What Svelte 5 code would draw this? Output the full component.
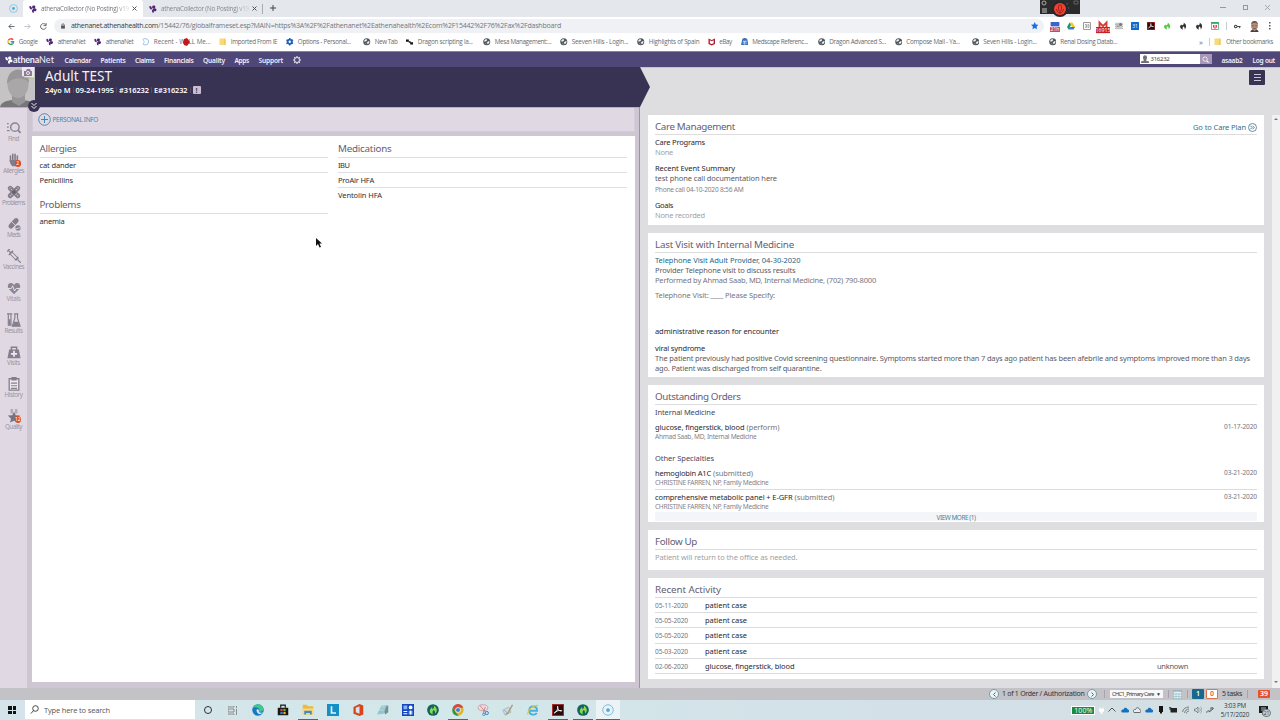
<script>
  // Letter-spaces a single line of text so that it takes up the given width.
  function fit(node, width) {
    const natural = node.getBoundingClientRect().width;
    const count = node.textContent.length;
    node.style.letterSpacing = (width - natural) / count + 'px';
  }

  const tabs = [{ active: true }, { active: false }];
  const bookmarks = [
    ['google', 'Google', 19, 39], ['leaf', 'athenaNet', 27.5, 48], ['leaf', 'athenaNet', 27.5, 48],
    ['ring', 'Recent - WELL Me...', 57, 77], ['folder', 'Imported From IE', 46.5, 67], ['cog', 'Options - Personal...', 53, 77],
    ['globe', 'New Tab', 22.5, 43], ['bits', 'Dragon scripting la...', 55, 77], ['globe', 'Mesa Management:...', 56.5, 77],
    ['globe', 'Seeven Hills - Login...', 56.5, 77], ['globe', 'Highlights of Spain', 50.5, 70.5], ['shield', 'eBay', 12.5, 33],
    ['med', 'Medscape Referenc...', 55.5, 77], ['globe', 'Dragon Advanced S...', 56.5, 77], ['globe', 'Compose Mail - Ya...', 53.5, 77],
    ['globe', 'Seven Hills - Login...', 53.5, 77], ['globe', 'Renal Dosing Datab...', 57, 80]
  ];
  const extensions = ['extcal', 'drive', 'extgrey', 'gmail', 'extnews', 'ext31', 'pdf', 'flameg', 'flame', 'flame', 'pocket'];
  const nav = [['Calendar', 26.5], ['Patients', 25], ['Claims', 19.5], ['Financials', 29.5], ['Quality', 22], ['Apps', 14.5], ['Support', 24.5]];
  const rail = [
    ['find', 'Find', 11], ['hand', 'Allergies', 21, '2'], ['bandage', 'Problems', 23], ['pills', 'Meds', 13], ['syringe', 'Vaccines', 21],
    ['heart', 'Vitals', 14], ['tubes', 'Results', 18], ['bag', 'Visits', 13], ['clip', 'History', 18], ['star', 'Quality', 17, '12']
  ];
  const activity = [
    ['05-11-2020', 'patient case', 42], ['05-05-2020', 'patient case', 42], ['05-05-2020', 'patient case', 42],
    ['05-03-2020', 'patient case', 42], ['02-06-2020', 'glucose, fingerstick, blood', 89.5, 'unknown']
  ];
  const apps = [['edge'], ['store'], ['explorer', 1], ['ell'], ['office'], ['note'], ['grid'], ['dragon'], ['chrome', 1], ['snip'], ['paint'], ['ie'], ['pdf', 1], ['dragon', 1], ['target', 2]];
  const tray = ['up', 'cloud', 'cloudw', 'cloud', 'usb', 'battery', 'wifi', 'speaker', 'pen'];
</script>

{#snippet t(text, width, cls = '')}<span class="t {cls}" use:fit={width}>{text}</span>{/snippet}

{#snippet icon(name, size = 8)}
  <svg class="icon" width={size} height={size} viewBox="0 0 16 16" fill="none">
    {#if name === 'leaf'}
      <path d="M7 7C5 3 7 0 10 1c3 0 4 4 1 6zM6 9C2 9 0 6 1 2c3-1 5 2 5 7zM7 9c2-3 8-3 8 0 0 4-3 4-5 3l-1 4c-3-1-4-4-2-7z" fill="#4f2678" />
    {:else if name === 'whiteleaf'}
      <path d="M7 7C5 3 7 0 10 1c3 0 4 4 1 6zM6 9C2 9 0 6 1 2c3-1 5 2 5 7zM7 9c2-3 8-3 8 0 0 4-3 4-5 3l-1 4c-3-1-4-4-2-7z" fill="#fff" />
    {:else if name === 'google'}
      <path d="M13 4A6 6 0 0 0 3 5" stroke="#e2483c" stroke-width="3" /><path d="M3 5a6 6 0 0 0 0 6" stroke="#f5b91f" stroke-width="3" /><path d="M3 11a6 6 0 0 0 9 1" stroke="#35a555" stroke-width="3" /><path d="M12 12c1.500-1 2-2.500 2-4H8" stroke="#4682ea" stroke-width="3" />
    {:else if name === 'ring'}
      <path d="M2 3c3-3 12-2 12 5S5 16 2 13" stroke="#78a9dc" stroke-width="1.700" /><path d="M2 3l3 5-3 5" stroke="#78a9dc" stroke-width="1.200" />
    {:else if name === 'folder'}
      <path d="M1 1h10l3 3v11H1z" fill="#f7d97b" /><path d="M11 1h3v14h-3z" fill="#edc75d" />
    {:else if name === 'cog'}
      <circle cx="8" cy="8" r="4.500" stroke="#1f62bd" stroke-width="4" /><path d="M8 0v3M8 13v3M1 4l3 2M12 10l3 2M1 12l3-2M12 6l3-2" stroke="#1f62bd" stroke-width="3" />
    {:else if name === 'globe'}
      <circle cx="8" cy="8" r="7.500" fill="#50565b" /><path d="M3 4l4-2 2 2-2 3-4 1zM10 8l4-2-1 5-3 2-2-3zM4 11l3 1v2z" fill="#f1f4f5" />
    {:else if name === 'bits'}
      <path d="M0 3h6v5H0zM6 7h4v3H6zM9 9h6v5H9z" fill="#111" />
    {:else if name === 'shield'}
      <path d="M1 1l7 3 7-3v12l-7 3-7-3z" fill="#b21d2f" /><path d="M4 5l4 2 4-2v6l-4 2-4-2z" fill="#fff" />
    {:else if name === 'med'}
      <path d="M2 6a6 6 0 0 1 12 0l2 9H0z" fill="#3971b9" /><path d="M4 7h8M4 11h2m4 0h2M8 7v7" stroke="#dcecff" stroke-width="2" />
    {:else if name === 'target'}
      <circle cx="8" cy="8" r="7" stroke="#74bce0" stroke-width="1.300" /><circle cx="8" cy="8" r="2.500" fill="#4da9d8" />
    {:else if name === 'back'}
      <path d="M15 8H2m6-6L2 8l6 6" stroke="#555a60" stroke-width="2" />
    {:else if name === 'forward'}
      <path d="M1 8h13M8 2l6 6-6 6" stroke="#b8bbc0" stroke-width="2" />
    {:else if name === 'reload'}
      <path d="M13 4a6.500 6.500 0 1 0 1 6M14 0v6H8" stroke="#50555b" stroke-width="2" />
    {:else if name === 'lock'}
      <path d="M3 7h10v8H3z" fill="#555" /><path d="M5 8V5a3 3 0 0 1 6 0v3" stroke="#555" stroke-width="2" />
    {:else if name === 'bluestar'}
      <path d="M8 0l2.400 5.300 5.600.6-4.200 4 1.200 5.800L8 12.800 3 15.700l1.200-5.800-4.200-4 5.600-.6z" fill="#1b6ee0" />
    {:else if name === 'extcal'}
      <path d="M1 0h14v7H1z" fill="#3e62c9" /><path d="M0 8h16v8H0z" fill="#d3494b" /><text x="8" y="15" font-size="8" text-anchor="middle" fill="#fff">21h</text>
    {:else if name === 'drive'}
      <path d="M5 1h6l5 9h-6z" fill="#f8c62e" /><path d="M5 1l3 5-5 9-3-5z" fill="#1c9b58" /><path d="M5 10h11l-3 5H3z" fill="#3878e0" />
    {:else if name === 'extgrey'}
      <path d="M1 1h14v14H1z" stroke="#9a9a9a" stroke-width="2" /><path d="M4 5h3v6H4m5-6h3v6H9M4 8h8" stroke="#999" stroke-width="1.500" />
    {:else if name === 'gmail'}
      <path d="M4 8V3l4 4 4-4v5" stroke="#d93a34" stroke-width="2.200" /><rect y="8" width="16" height="7" fill="#c91f26" /><text x="8" y="14" font-size="6" text-anchor="middle" fill="#fff">16915</text>
    {:else if name === 'extnews'}
      <path d="M1 2h14v12H1z" fill="#ccc" stroke="#888" stroke-dasharray="2 2" /><circle cx="11" cy="5" r="3" fill="#777" /><path d="M3 6h4M3 9h6" stroke="#777" />
    {:else if name === 'ext31'}
      <rect width="16" height="16" rx="1" fill="#1268cb" /><text x="8" y="12" font-size="10" text-anchor="middle" fill="#fff">31</text>
    {:else if name === 'pdf'}
      <rect width="16" height="16" fill="#b03430" /><rect x="1.200" y="1.200" width="13.600" height="13.600" fill="#2c0a0b" /><path d="M3 12c3-1 5-5 4.500-9 0 4 2 7 5.500 6-4-1-7 0-10 3z" stroke="#fff" stroke-width="1.200" />
    {:else if name === 'flame'}
      <path d="M9 1c6 3 7 10 2 14 1-3 0-5-2-6-2 1-2 4-1 6-6-1-8-8-3-10 0 2 1 2 3 1 2-2 2-3 1-5z" fill="#333" />
    {:else if name === 'flameg'}
      <path d="M9 1c6 3 7 10 2 14 1-3 0-5-2-6-2 1-2 4-1 6-6-1-8-8-3-10 0 2 1 2 3 1 2-2 2-3 1-5z" fill="#54c944" />
    {:else if name === 'pocket'}
      <rect x="1" y="1" width="14" height="14" stroke="#4a9e72" stroke-width="1.500" /><path d="M1 2h14" stroke="#279b58" stroke-width="3" /><path d="M5 6v4c0 3 6 3 6 0V6M8 6v4" stroke="#db4650" stroke-width="2" />
    {:else if name === 'key'}
      <circle cx="4" cy="8" r="3" stroke="#444" stroke-width="2.300" /><path d="M7 8h8m-2 0v4" stroke="#444" stroke-width="2.300" />
    {:else if name === 'avatar'}
      <ellipse cx="8" cy="7" rx="5" ry="7" fill="#b58c77" /><path d="M3 5c0-7 10-7 10 0-2-3-8-3-10 0z" fill="#75604f" /><path d="M2 16c1-4 3-4 6-2 3-2 5-2 6 2z" fill="#46414b" /><path d="M4 7h3m2 0h3M6 11h4" stroke="#684b3f" />
    {:else if name === 'gear'}
      <circle cx="8" cy="8" r="5" stroke="#eee" stroke-width="1.800" /><path d="M8 0v3m0 10v3M0 8h3m10 0h3M2.500 2.500l2 2m7 7l2 2m0-11l-2 2m-7 7l-2 2" stroke="#eee" stroke-width="2.200" />
    {:else if name === 'search'}
      <circle cx="7" cy="7" r="5" stroke="#fff" stroke-width="1.700" /><path d="M11 11l4 4" stroke="#fff" stroke-width="2.400" />
    {:else if name === 'person'}
      <path d="M4 5c0-6 8-6 8 0 0 4-2 5-2 6l6 2v3H0v-3l6-2c0-1-2-2-2-6z" fill="#737078" />
    {:else if name === 'find'}
      <circle cx="9" cy="7" r="4.800" stroke="#8a8592" stroke-width="1.700" /><path d="M12.500 10.500l3 3" stroke="#8a8592" stroke-width="2.200" /><path d="M0 3h2M0 7h2m-2 4h3" stroke="#8a8592" stroke-width="1.300" />
    {:else if name === 'hand'}
      <path d="M4 9V3.500m2.600 5V1.500m2.600 7V1.500m2.600 7V3.500" stroke="#827c89" stroke-width="1.800" stroke-linecap="round" /><path d="M3 8h9.700v3l-2 4H6c-2-2-3-4-3-7z" fill="#827c89" />
    {:else if name === 'bandage'}
      <path d="M3.700 3.700l8.600 8.600m0-8.600l-8.600 8.600" stroke="#857f8c" stroke-width="5.400" stroke-linecap="round" /><path d="M3 3l10 10m0-10L3 13" stroke="#d2cbd7" stroke-width="1.500" stroke-dasharray="1 1.500" /><path d="M5 8l3-3 3 3-3 3z" fill="#68626f" />
    {:else if name === 'pills'}
      <path d="M10.500 4l-6 6.500" stroke="#857f8c" stroke-width="5.600" stroke-linecap="round" /><path d="M5 5l5 5" stroke="#dfd8e4" /><circle cx="12.500" cy="12.500" r="3" fill="#857f8c" /><path d="M9 14l6-2" stroke="#dfd8e4" />
    {:else if name === 'syringe'}
      <path d="M4 4l8 8" stroke="#857f8c" stroke-width="4" /><path d="M5 5l6 6" stroke="#e5dfe9" stroke-width="2" /><path d="M0 3l3-3M1 1l3 3m-2 3l5-5M9 13l4-4m-1 3l4 4" stroke="#857f8c" stroke-width="1.300" />
    {:else if name === 'heart'}
      <path d="M8 15L1.500 8.500C-1 3 5 0 8 4.500c3-4.500 9-1.500 6.500 4z" fill="#8b8592" /><path d="M1 8.500h4l1.500-3 2 6 2-3H15" stroke="#e9e3ed" stroke-width="1.100" />
    {:else if name === 'tubes'}
      <path d="M0 1h6M1.500 1v13h3V1M8 1h5m-4 0v5l-3 9h9L12 6V1" stroke="#857f8c" stroke-width="1.300" /><path d="M8 10h5l1.500 5H6.500zM2 7h2v7H2z" fill="#857f8c" />
    {:else if name === 'bag'}
      <path d="M5 6V2.500h6V6" stroke="#857f8c" stroke-width="1.600" /><path d="M2.500 5h11L15.500 15H.5z" fill="#857f8c" /><path d="M8 6.500v7M4.500 10h7" stroke="#eee8f1" stroke-width="2" />
    {:else if name === 'clip'}
      <path d="M2.500 2h11v13h-11z" stroke="#857f8c" stroke-width="1.500" fill="#eee9f1" /><path d="M5 0h6v4H5z" fill="#857f8c" /><path d="M4.500 7h7m-7 3h7m-7 3h7" stroke="#857f8c" stroke-width="1.200" />
    {:else if name === 'star'}
      <path d="M4 0h3v5H4zm5 0h3v5H9z" fill="#b3acba" /><path d="M8 3l2 4 5 .5-3.500 3.500 1 4.500L8 13.500l-4.500 2 1-4.500L1 7.500 6 7z" fill="#77727f" />
    {:else if name === 'edge'}
      <circle cx="8" cy="8" r="7.700" fill="#1579c4" /><path d="M1 5c3-7 14-6 14 2 0 3-3 4-6 3 3-5-4-7-8-5z" fill="#45c58a" /><path d="M6 8c1-2 4-1 3 2 1 2 4 2 6 1-5 5-9 1-9-3z" fill="#d8edf1" />
    {:else if name === 'store'}
      <path d="M1 5h14v10H1z" fill="#181818" /><path d="M5 5V1.500h6V5" stroke="#181818" stroke-width="1.600" /><path d="M4.500 6.500h3v3h-3z" fill="#d94e2a" /><path d="M8.500 6.500h3v3h-3z" fill="#6eaa3a" /><path d="M4.500 10.500h3v3h-3z" fill="#3587cf" /><path d="M8.500 10.500h3v3h-3z" fill="#e5b429" />
    {:else if name === 'explorer'}
      <path d="M1 1h5l2 2h7v11H1z" fill="#edb740" /><path d="M1 6h14v8H1z" fill="#f8da78" /><path d="M3 14V9h10v5h-2.500v-2h-5v2z" fill="#3e8bcb" />
    {:else if name === 'ell'}
      <rect width="16" height="16" fill="#1490c6" /><path d="M6 3v9h6" stroke="#e4f5f9" stroke-width="2.200" />
    {:else if name === 'office'}
      <path d="M10 0l5 2v12l-5 2-8-3V4zM10 3L5 5v6l5 2z" fill="#d9431e" fill-rule="evenodd" />
    {:else if name === 'note'}
      <path d="M6 3l9-1v9l-4 3z" fill="#758e94" /><path d="M6 2l7 0-4 11-9 1z" fill="#91c6ce" /><path d="M6 4h5M4 8h5" stroke="#cfe6e8" />
    {:else if name === 'grid'}
      <rect width="16" height="16" fill="#1648bd" /><path d="M2 2h5v5H2zm7 7h5v5H9z" fill="#87b3ee" /><circle cx="11.500" cy="4.500" r="2.500" fill="#fff" /><path d="M2 10h5M2 13h5M11.500 9v5" stroke="#fff" stroke-width="1.500" />
    {:else if name === 'dragon'}
      <circle cx="8" cy="8" r="7.800" fill="#11645d" /><path d="M9 2c5 3 5 8 2 11 0-3-1-4-2-5-2 1-2 4-1 6-6-2-5-7-1-10v3c2-1 3-2 2-5z" fill="#90d94b" />
    {:else if name === 'chrome'}
      <circle cx="8" cy="8" r="7.500" fill="#ddb62e" /><path d="M1 5c3-7 12-6 14 0H8L5 10z" fill="#d74a3c" /><path d="M1 5l4 6 4 4.500C2 16-1 11 1 5z" fill="#35954e" /><circle cx="8" cy="8" r="3.300" fill="#3e7ed6" stroke="#fff" />
    {:else if name === 'snip'}
      <ellipse cx="8" cy="5" rx="6.500" ry="4" fill="#f1d9dc" stroke="#c99097" /><path d="M4 2l8 10m-1-8L8 13" stroke="#b5707b" /><circle cx="13" cy="12" r="2.200" stroke="#3483bd" stroke-width="1.300" /><circle cx="9" cy="14" r="1.500" stroke="#3483bd" />
    {:else if name === 'paint'}
      <path d="M1 8l8-4 3 7-8 4z" fill="#c9dbe4" stroke="#9db4c0" /><path d="M14 1L8 12l-3 2" stroke="#b79b74" stroke-width="2" /><path d="M3 8l5 5" stroke="#6d9eb8" />
    {:else if name === 'ie'}
      <path d="M3 9h10.500c0-7.500-10.500-7.500-10.500 0 0 6 8 6.500 10 3" stroke="#46b0df" stroke-width="2.500" /><path d="M1 14C0 9 8 1 15 2" stroke="#e5c43a" stroke-width="1.500" />
    {:else if name === 'up'}
      <path d="M1 11l7-7 7 7" stroke="#444" stroke-width="1.800" />
    {:else if name === 'cloud'}
      <path d="M2 13c-4-4 1-7 3-6 2-6 8-3 8 0 4 0 4 5 1 6z" fill="#176fbb" />
    {:else if name === 'cloudw'}
      <path d="M2 13c-4-4 1-7 3-6 2-6 8-3 8 0 4 0 4 5 1 6z" stroke="#555" stroke-width="1.700" fill="#e8edf0" />
    {:else if name === 'usb'}
      <path d="M4 0h8v12H4zm2 12h4v3H6z" fill="#151515" />
    {:else if name === 'battery'}
      <path d="M3 4h13v9H3z" fill="#222" /><path d="M0 3h4M0 6h4m0-3v5" stroke="#222" stroke-width="1.500" />
    {:else if name === 'wifi'}
      <path d="M1 12C2 6 7 2 14 2M5 14c1-5 4-8 9-8M9 15c0-3 2-5 5-5" stroke="#5a646a" stroke-width="1.600" />
    {:else if name === 'speaker'}
      <path d="M1 6h3l4-4v12l-4-4H1z" stroke="#555" stroke-width="1.200" /><path d="M11 5c2 2 2 4 0 6m2-9c4 3 4 9 0 12" stroke="#777" stroke-width="1.300" />
    {:else if name === 'pen'}
      <path d="M2 14c-3-4 6-7 4-2L13 3l2 2-8 7M8 5c5-4 8 0 4 3" stroke="#4b555a" stroke-width="1.600" />
    {/if}
  </svg>
{/snippet}

<div class="page">
  <div class="tabbar">
    <span class="pin">{@render icon('target', 9)}</span>
    {#each tabs as tab}
      <div class="tab" class:active={tab.active}>
        {@render icon('leaf')}<span class="tabtext">{@render t('athenaCollector (No Posting) v19', 88)}</span><svg class="close" width="5" height="5" viewBox="0 0 5 5" stroke="#555"><path d="M.5.5l4 4m0-4l-4 4" /></svg>
      </div>
    {/each}
    <i class="tabsep"></i><svg class="newtab" width="6" height="6" viewBox="0 0 6 6" stroke="#444"><path d="M3 0v6M0 3h6" /></svg>
    <div class="wincontrols"><i class="min"></i><i class="restore"></i><svg width="5" height="5" viewBox="0 0 5 5" stroke="#999" stroke-width=".8"><path d="M0 0l5 5m0-5L0 5" /></svg></div>
    <div class="recorder">
      <svg width="40" height="18" viewBox="0 0 40 18"><path d="M0 0h40v14H0z" fill="#2b2b2b" /><path d="M2 8h5v5H2z" fill="#777" /><circle cx="4" cy="3" r="2" fill="none" stroke="#aaa" /><path d="M27 3v2m1 2v2M34 1h4v3h-4z" stroke="#777" stroke-width=".7" fill="none" /><circle cx="20" cy="9" r="8" fill="#26282b" /><circle cx="20" cy="9" r="6" fill="#ef4130" /><rect x="18.500" y="5" width="3" height="6" rx="1.500" fill="none" stroke="#8f1b15" stroke-width=".8" /><path d="M16.500 9c0 5 7 5 7 0M20 12v2" fill="none" stroke="#8f1b15" stroke-width=".8" /></svg>
    </div>
  </div>

  <div class="toolbar">
    <div class="navbtns">{@render icon('back', 7)}{@render icon('forward', 7)}{@render icon('reload', 7)}</div>
    <div class="url">{@render icon('lock', 6)}<span class="address"><b>{@render t('athenanet.athenahealth.com', 87)}</b>{@render t('/15442/76/globalframeset.esp?MAIN=https%3A%2F%2Fathenanet%2Eathenahealth%2Ecom%2F15442%2F76%2Fax%2Fdashboard', 403)}</span>{@render icon('bluestar', 7.5)}</div>
    <div class="exts">{#each extensions as e}<span class:tall={e === 'extcal' || e === 'gmail'}>{@render icon(e, e === 'gmail' ? 14 : e === 'extcal' ? 10 : 8)}</span>{/each}</div>
    <i class="sep"></i>
    <div class="profile">{@render icon('key', 7)}{@render icon('avatar', 11)}<svg width="2" height="8" viewBox="0 0 2 8" fill="#555"><path d="M0 0h1.500v1.500H0zm0 3h1.500v1.500H0zm0 3h1.500v1.500H0z" /></svg></div>
  </div>

  <div class="bookmarks">
    {#each bookmarks as [ic, label, w, slot]}
      <div class="bm" style:width="{slot}px">{@render icon(ic, 7.5)}{@render t(label, w)}{#if ic === 'ring'}<svg class="reddot" width="7" height="8" viewBox="0 0 7 8"><path d="M1 1l3-1 3 4-3 4-3-1-1-3z" fill="#c4181f" /></svg>{/if}</div>
    {/each}
    <div class="other"><span>»</span><i class="sep"></i>{@render icon('folder', 7.5)}{@render t('Other bookmarks', 47)}</div>
  </div>

  <nav class="nav">
    <div class="brand">{@render icon('whiteleaf', 8)}<b>{@render t('athena', 26)}</b>{@render t('Net', 15)}</div>
    <div class="menu">{#each nav as [label, w]}{@render t(label, w)}{/each}</div>
    <span class="navgear">{@render icon('gear', 8)}</span>
    <div class="navright">
      <div class="searchbox">{@render icon('person', 8)}<span class="q">{@render t('316232', 19)}</span></div>
      <div class="searchbtn">{@render icon('search', 7)}</div>
      <span class="user">{@render t('asaab2', 21)}</span>{@render t('Log out', 22.5)}
    </div>
  </nav>

  <div class="main">
    <section class="left">
      <header class="patient">
        <div class="photo">
          <svg width="35" height="40" viewBox="0 0 35 40"><rect width="35" height="40" fill="#c5c3c4" /><path d="M0 40c2-6 7-6 12-7h12c5 1 10 2 11 7z" fill="#777678" /><path d="M12 27h13v8l-6 4-7-4z" fill="#979597" /><ellipse cx="18" cy="17" rx="10.500" ry="14" fill="#a9a7a8" /><path d="M7 17C7-2 29-2 29 16c-4-6-17-6-22 1z" fill="#989698" /></svg>
          <div class="camera"><svg width="12" height="12" viewBox="0 0 12 12"><path d="M0 0h12v12L0 9z" fill="#ede7ef" /><path d="M2 4h2l1-2h3l1 2h1v5H2z" fill="#8d7b98" /><circle cx="6" cy="6" r="1.500" fill="#8d7b98" stroke="#eee" /><path d="M2 10.500c4 0 7 0 10 1" stroke="#a4c857" stroke-width="1.200" fill="none" /></svg></div>
          <div class="expand"><svg width="12" height="12" viewBox="0 0 12 12" fill="none"><circle cx="6" cy="6" r="6" fill="#393353" /><path d="M3.500 3L6 5.500 8.500 3M3.500 6L6 8.500 8.500 6" stroke="#fff" stroke-width=".9" /></svg></div>
        </div>
        <div class="ident">
          <h1>{@render t('Adult TEST', 67)}</h1>
          <div class="facts">{@render t('24yo M', 25.5)}<i></i>{@render t('09-24-1995', 38.5)}<i></i>{@render t('#316232', 30)}<i></i>{@render t('E#316232', 33.5)}<i></i><span class="flag">!</span></div>
        </div>
        <svg class="arrow" width="11" height="40" viewBox="0 0 11 40"><path d="M0 0l10 20L0 40z" fill="#393353" /></svg>
      </header>
      <div class="leftbody">
        <aside class="rail">
          {#each rail as [ic, label, w, n]}
            <div class="railitem"><div class="pic">{@render icon(ic, 14)}{#if n}<span class="count">{n}</span>{/if}</div>{@render t(label, w)}</div>
          {/each}
        </aside>
        <div class="content">
          <div class="personal"><svg width="13" height="13" viewBox="0 0 13 13" fill="none" stroke="#4086ae"><circle cx="6.500" cy="6.500" r="5.800" stroke-width=".9" /><path d="M6.500 3v7M3 6.500h7" /></svg>{@render t('PERSONAL INFO', 45.5)}</div>
          <div class="chart">
            <div class="col">
              <h2>{@render t('Allergies', 37)}</h2>
              <p class="lined">{@render t('cat dander', 36.5)}</p><p class="lined">{@render t('Penicillins', 33.5)}</p>
              <h2 class="second">{@render t('Problems', 41)}</h2>
              <p class="lined">{@render t('anemia', 25)}</p>
            </div>
            <div class="col">
              <h2>{@render t('Medications', 53.5)}</h2>
              <p class="lined">{@render t('IBU', 11.5)}</p><p class="lined">{@render t('ProAir HFA', 36)}</p><p class="lined">{@render t('Ventolin HFA', 44)}</p>
            </div>
          </div>
        </div>
      </div>
    </section>

    <section class="right">
      <div class="righttop"><div class="burger"><i></i><i></i><i></i></div></div>
      <div class="scrollarea">
        <div class="cards">
          <article class="care">
            <div class="head"><h2>{@render t('Care Management', 80)}</h2><span class="goto">{@render t('Go to Care Plan', 53)}<svg width="9" height="9" viewBox="0 0 9 9" fill="none" stroke="#397896"><circle cx="4.500" cy="4.500" r="4" stroke-width=".8" /><path d="M2.300 2.700l1.800 1.800-1.800 1.800m2.200-3.600l1.800 1.800-1.800 1.800" stroke-width=".9" /></svg></span></div>
            <p class="strong">{@render t('Care Programs', 50)}</p><p class="pale">{@render t('None', 18)}</p>
            <p class="strong gap6">{@render t('Recent Event Summary', 80)}</p><p>{@render t('test phone call documentation here', 122)}</p><p class="tiny up">{@render t('Phone call 04-10-2020 8:56 AM', 88.5)}</p>
            <p class="strong goals">{@render t('Goals', 18)}</p><p class="pale">{@render t('None recorded', 50)}</p>
          </article>
          <article class="visit">
            <div class="head"><h2>{@render t('Last Visit with Internal Medicine', 139)}</h2></div>
            <p class="link">{@render t('Telephone Visit Adult Provider, 04-30-2020', 145.5)}</p>
            <p>{@render t('Provider Telephone visit to discuss results', 140.5)}</p>
            <p class="mid">{@render t('Performed by Ahmad Saab, MD, Internal Medicine, (702) 790-8000', 221)}</p>
            <p class="mid specify">{@render t('Telephone Visit: ____ Please Specify:', 120)}</p>
            <p class="strong admin">{@render t('administrative reason for encounter', 124)}</p>
            <p class="strong viral">{@render t('viral syndrome', 50)}</p>
            <p>{@render t('The patient previously had positive Covid screening questionnaire. Symptoms started more than 7 days ago patient has been afebrile and symptoms improved more than 3 days', 595)}</p>
            <p>{@render t('ago. Patient was discharged from self quarantine.', 166.5)}</p>
          </article>
          <article class="orders">
            <div class="head"><h2>{@render t('Outstanding Orders', 85.5)}</h2></div>
            <p class="sub">{@render t('Internal Medicine', 60)}</p>
            <div class="order first"><p class="strong">{@render t('glucose, fingerstick, blood', 89.5)} {@render t('(perform)', 33, 'soft')}</p>{@render t('01-17-2020', 33, 'date')}</div>
            <p class="tiny">{@render t('Ahmad Saab, MD, Internal Medicine', 101.5)}</p>
            <p class="sub others">{@render t('Other Specialties', 59)}</p>
            <div class="order"><p class="strong">{@render t('hemoglobin A1C', 56)} {@render t('(submitted)', 40, 'soft')}</p>{@render t('03-21-2020', 33, 'date')}</div>
            <p class="tiny">{@render t('CHRISTINE FARREN, NP, Family Medicine', 113.5)}</p>
            <div class="order line"><p class="strong">{@render t('comprehensive metabolic panel + E-GFR', 137.5)} {@render t('(submitted)', 40, 'soft')}</p>{@render t('03-21-2020', 33, 'date')}</div>
            <p class="tiny">{@render t('CHRISTINE FARREN, NP, Family Medicine', 113.5)}</p>
            <div class="more">{@render t('VIEW MORE (1)', 39)}</div>
          </article>
          <article class="follow">
            <div class="head"><h2>{@render t('Follow Up', 42)}</h2></div>
            <p class="pale">{@render t('Patient will return to the office as needed.', 142.5)}</p>
          </article>
          <article class="activity">
            <div class="head"><h2>{@render t('Recent Activity', 66)}</h2></div>
            {#each activity as [date, label, w, extra]}
              <div class="act"><span class="when">{@render t(date, 33, 'date')}</span><span class="what">{@render t(label, w)}</span>{#if extra}<span class="extra">{@render t(extra, 31)}</span>{/if}</div>
            {/each}
          </article>
        </div>
        <div class="scrollbar"><i class="tri upw"></i><i class="tri"></i></div>
      </div>
    </section>
  </div>

  <div class="status">
    <span class="pager"><svg width="3" height="5" viewBox="0 0 3 5" fill="none" stroke="#26627e" stroke-width=".9"><path d="M2.500.5l-2 2 2 2" /></svg></span>{@render t('1 of 1 Order / Authorization', 82.5)}<span class="pager"><svg width="3" height="5" viewBox="0 0 3 5" fill="none" stroke="#26627e" stroke-width=".9"><path d="M.5.5l2 2-2 2" /></svg></span><i class="sep s1"></i>
    <span class="select">{@render t('CHC1_Primary Care', 42)}<b>▼</b></span><i class="sep s2"></i>
    <svg class="cal" width="9" height="9" viewBox="0 0 9 9"><path d="M0 1h9v8H0z" fill="#e6f0f3" stroke="#78a7b9" /><path d="M0 4h9M0 6.500h9M3 3v6m3-6v6M2 0v2m5-2v2" stroke="#8eb8c6" stroke-width=".6" /></svg><i class="sep s3"></i>
    <span class="num blue">1</span><span class="num outline">0</span>{@render t('5 tasks', 20)}<i class="sep s4"></i><span class="num orange">39</span>
  </div>

  <div class="taskbar">
    <div class="start"><i></i><i></i><i></i><i></i></div>
    <div class="tasksearch"><svg width="9" height="9" viewBox="0 0 9 9" fill="none" stroke="#333" stroke-width=".9"><circle cx="5.500" cy="3.500" r="2.800" /><path d="M3.500 5.500L1 8.500" /></svg>{@render t('Type here to search', 66)}</div>
    <div class="cortana"><i></i></div>
    <div class="taskview"><svg width="9" height="9" viewBox="0 0 9 9" fill="none" stroke="#777" stroke-width=".8"><path d="M0 0v1h6V0M0 3h6v3H0zM0 9V8h6v1M8.500 0v2m0 1v6" /></svg></div>
    <div class="apps">{#each apps as [ic, open]}<div class="app" class:open class:current={open === 2}>{@render icon(ic, 12)}</div>{/each}</div>
    <div class="tray">
      <span class="pct">{@render t('100%', 18)}</span><svg class="plug" width="5" height="7" viewBox="0 0 5 7"><path d="M1 0v2m3-2v2M0 2h5v2L3 5v2H2V5L0 4z" fill="#fff" stroke="#fff" stroke-width=".6" /></svg>
      {#each tray as ic}<span class="trayicon">{@render icon(ic, 8)}</span>{/each}
      <div class="clock">{@render t('3:03 PM', 22)}{@render t('5/17/2020', 28.5)}</div>
      <div class="notif"><svg width="9" height="9" viewBox="0 0 9 9"><path d="M0 0h9v7H5L3 9V7H0z" fill="#1a1d20" /><path d="M2 2h5M2 4h5" stroke="#ddd" stroke-width=".8" /></svg><span>21</span></div>
    </div>
  </div>
  <svg class="cursor" width="6" height="10" viewBox="0 0 6 10"><path d="M0 0v8l2-2 1.500 3.500L5 9 3.500 5.500H6z" fill="#111" /></svg>
</div>

<style>
  :global(body) { margin: 0; overflow: hidden; }
  * { box-sizing: border-box; }
  p, h1, h2 { margin: 0; font-weight: 400; }
  i { display: block; font-style: normal; }
  .icon, svg { display: block; flex: none; }
  .t { display: inline-block; white-space: pre; flex: none; }
  .page { width: 1280px; height: 720px; display: flex; flex-direction: column; position: relative; overflow: hidden; font: 7.5px/10px "Noto Sans", sans-serif; color: #5b5962; background: #dedee0; }

  .tabbar { height: 17px; background: #e4e8ed; display: flex; position: relative; font: 6.3px/16px "Open Sans", sans-serif; color: #858991; }
  .pin { width: 23px; padding: 4px 0 0 9px; }
  .tab { width: 120px; height: 17px; padding-left: 6px; display: flex; align-items: center; border-radius: 3px 3px 0 0; }
  .tab.active { background: #fff; color: #73777e; }
  .tabtext { width: 91px; margin-left: 4px; overflow: hidden; -webkit-mask-image: linear-gradient(90deg, #000 82%, rgba(0,0,0,.15) 97%); mask-image: linear-gradient(90deg, #000 82%, rgba(0,0,0,.15) 97%); }
  .tabsep { width: 1px; height: 10px; margin: 4px 7px 0 -1px; background: #a6abb2; }
  .newtab { margin-top: 5px; }
  .wincontrols { margin-left: auto; width: 60px; display: flex; align-items: center; padding-bottom: 3px; }
  .min { width: 6px; height: 1px; background: #999; margin-right: 17px; }
  .restore { width: 5px; height: 5px; border: 1px solid #999; margin-right: 17px; }
  .recorder { position: absolute; left: 1040px; top: 0; z-index: 3; }

  .toolbar { height: 17px; background: #fff; display: flex; align-items: center; font: 7px/14px "Open Sans", sans-serif; padding-top: 1px; }
  .navbtns { width: 54px; display: flex; gap: 9px; padding-left: 8px; }
  .url { width: 990px; height: 14px; background: #eff1f4; border-radius: 7px; display: flex; align-items: center; padding: 0 6px; }
  .address { margin-left: 5px; flex: 1; display: flex; color: #74777b; }
  .address b { font-weight: 400; color: #393c40; }
  .exts { display: flex; margin-left: 2.500px; height: 16px; }
  .exts > span { width: 16px; display: flex; align-items: center; justify-content: center; }
  .exts .tall { padding-top: 2px; }
  .sep { width: 1px; height: 8px; background: #c7cbd0; flex: none; }
  .toolbar > .sep { margin-left: 3px; }
  .profile { display: flex; align-items: center; gap: 8.500px; margin-left: 7px; }

  .bookmarks { height: 18px; background: #fff; border-bottom: 1px solid #89858d; display: flex; align-items: center; padding: 0 7px 1px; font: 6.3px/10px "Open Sans", sans-serif; color: #686b70; }
  .bm { display: flex; align-items: center; gap: 4.300px; flex: none; position: relative; }
  .reddot { position: absolute; left: 41px; top: 1px; }
  .other { margin-left: auto; display: flex; align-items: center; gap: 4.500px; }
  .other span:first-child { margin-right: 1px; font-size: 8px; }

  .nav { height: 15px; background: #504779; display: flex; align-items: center; color: #f2effa; font-size: 6.6px; padding-left: 5px; font-weight: 600; }
  .brand { width: 59px; display: flex; align-items: center; font: 400 9px/14px Lato, sans-serif; }
  .brand b { font-weight: 700; }
  .menu { display: flex; gap: 9.500px; line-height: 15px; padding: 1px 0 0 .5px; }
  .navgear { margin-left: 9.500px; }
  .navright { margin-left: auto; display: flex; align-items: center; padding-right: 5px; line-height: 11px; padding-top: 1px; }
  .searchbox { height: 10px; width: 60px; background: #fff; display: flex; align-items: center; padding-left: 1px; color: #444; font-weight: 400; font-size: 6px; margin-top: -2px; }
  .q { margin-left: 2px; line-height: 9px; }
  .searchbtn { width: 12px; height: 10px; background: #a997b9; display: grid; place-items: center; margin-top: -2px; }
  .user { margin: 0 10px 0 10px; }

  .main { height: 621px; display: flex; }
  .left { width: 640px; border-right: 1px solid #9a95a5; background: #cfc6d3; display: flex; flex-direction: column; }
  .patient { width: 640px; height: 40px; background: #393353; display: flex; position: relative; color: #fff; flex: none; }
  .photo { width: 35px; position: relative; }
  .camera { position: absolute; right: 1px; top: 0; }
  .expand { position: absolute; left: 28px; top: 33px; z-index: 2; }
  .arrow { position: absolute; left: 640px; top: 0; z-index: 2; }
  .ident { padding-left: 10px; }
  h1 { font-size: 13.5px; line-height: 19px; height: 17px; color: #f4f2f8; }
  .facts { display: flex; font-size: 7.4px; font-weight: 600; line-height: 12px; align-items: center; }
  .facts i { width: 1px; height: 6px; background: #514b69; margin: 0 2px; }
  .flag { background: #c9bed1; color: #393353; width: 8px; height: 8px; border-radius: 1px; text-align: center; line-height: 8px; }
  .leftbody { flex: 1; display: flex; border-top: 1px solid #b7aecb; }
  .rail { width: 27px; background: #e0d9e4; padding-top: 13px; color: #9c94a3; font-size: 6.3px; }
  .railitem { height: 32px; display: flex; flex-direction: column; align-items: center; line-height: 8px; }
  .pic { position: relative; margin-bottom: -1.500px; height: 15px; }
  .count { position: absolute; left: 8px; top: 7px; min-width: 6.500px; height: 6.500px; border-radius: 4px; background: #df4d25; color: #fff; font-size: 5px; line-height: 6.500px; text-align: center; }
  .content { margin-left: 5px; width: 603px; }
  .personal { height: 24px; background: #e0d9e4; border: 1px solid #d5ccda; border-top: 0; display: flex; align-items: center; gap: 2px; padding-left: 4.500px; font-size: 6.5px; color: #4d83aa; }
  .chart { margin-top: 4px; height: 546px; background: #fff; display: flex; gap: 10px; padding: 6px 7.500px; }
  .col { width: 288.500px; }
  h2 { font-size: 9.8px; line-height: 13px; color: #625e75; }
  .col h2 { height: 15px; }
  .lined { border-top: 1px solid #dfdee2; height: 15.200px; padding-top: 2px; color: #2f2d34; }
  .col h2.second { margin-top: 10.500px; }

  .right { width: 640px; display: flex; flex-direction: column; }
  .righttop { height: 48px; display: flex; justify-content: flex-end; padding: 2px 15px 0 0; border-top: 1px solid #c6c1d4; }
  .burger { width: 16px; height: 15px; background: #393353; border-radius: 1px; display: flex; flex-direction: column; align-items: center; justify-content: center; gap: 2px; }
  .burger i { width: 7px; height: 1px; background: #cbc7d8; }
  .scrollarea { display: flex; flex: 1; }
  .cards { width: 632px; padding: 0 8px; display: flex; flex-direction: column; }
  article { background: #fff; padding: 5px 7px 0 7px; flex: none; overflow: hidden; }
  article p { height: 10px; line-height: 10px; }
  .care { height: 110px; }
  .visit { height: 144px; margin-top: 8px; }
  .orders { height: 137px; margin-top: 8px; }
  .follow { height: 40px; margin-top: 8px; }
  .activity { height: 101px; margin-top: 8px; }
  .head { height: 15px; border-bottom: 1px solid #dddde0; display: flex; justify-content: space-between; margin-bottom: 2px; }
  .goto { display: flex; align-items: center; gap: 2px; color: #2f6f8f; height: 14px; }
  .strong { color: #29272f; }
  .pale { color: #a09fa4; }
  .mid { color: #77757c; }
  .soft { color: #77757c; }
  .link { color: #226789; }
  .visit .link { height: 9px; }
  .gap6 { margin-top: 6px; }
  .tiny { font-size: 6.6px; color: #85838a; }
  .care .up { margin-top: 1px; height: 10px; line-height: 11px; }
  .goals { margin-top: 6px; }
  .specify { margin-top: 5px; }
  .admin { margin-top: 26px; }
  .viral { margin-top: 7px; }
  .sub { color: #47445c; }
  .order { display: flex; justify-content: space-between; height: 10px; }
  .first { margin-top: 5px; }
  .date { font-size: 6.6px; color: #77757c; }
  .orders .tiny { height: 8px; line-height: 9px; }
  .others { margin-top: 13px; }
  .others + .order { margin-top: 5px; }
  .line { border-top: 1px solid #dcdbe0; margin-top: 3px; padding-top: 2px; height: 13px; }
  .more { background: #f4f5f8; height: 9px; margin-top: 2px; color: #4b7f9c; font-size: 6.4px; line-height: 11px; text-align: center; }
  .activity .head { margin: 0; }
  .act { display: flex; height: 15.200px; border-bottom: 1px solid #dcdbe0; line-height: 15px; }
  .when { width: 50px; }
  .what { width: 452px; color: #29272f; }
  .scrollbar { width: 8px; background: #f1f1f1; display: flex; flex-direction: column; justify-content: space-between; align-items: center; padding: 1px 0 3px; }
  .tri { border: 2px solid transparent; border-top-color: #777; height: 0; }
  .tri.upw { border-top-color: transparent; border-bottom-color: #777; }
  .visit .head + .link { height: 10px; }

  .status { height: 12px; background: #c3c2c7; display: flex; align-items: center; padding-left: 989px; font-size: 7px; color: #34323a; }
  .pager { width: 10px; height: 10px; border: 1px solid #6e9bad; border-radius: 50%; background: #edf3f5; display: grid; place-items: center; margin-right: 3px; }
  .status .t + .pager { margin: 0 0 0 2.500px; }
  .status .sep { background: #a6a3ad; }
  .s1 { margin: 0 5px 0 7px; }
  .select { width: 53px; height: 8px; background: #f8f8f9; display: flex; align-items: center; gap: 2px; padding-left: 2px; font-size: 5.6px; }
  .select b { font-size: 5px; }
  .s2 { margin: 0 4px 0 5px; }
  .s3 { margin: 0 4px 0 5px; }
  .num { width: 12px; height: 10px; border-radius: 1px; line-height: 10px; text-align: center; font-weight: 600; color: #fff; }
  .blue { background: #17688e; margin-right: 2px; }
  .outline { background: #fff; border: 1px solid #dd7450; line-height: 8px; color: #dd5d35; margin-right: 4px; }
  .s4 { margin: 0 10px 0 5px; }
  .orange { background: #e4532b; height: 8px; line-height: 8px; }

  .taskbar { height: 20px; background: linear-gradient(90deg, #d5e3eb, #d3e8ea 35%, #d3e0e8 70%, #d5dfe2); display: flex; font-family: "Open Sans", sans-serif; color: #30363b; }
  .start { width: 25px; display: grid; grid-template-columns: 3.500px 3.500px; grid-template-rows: 3.500px 3.500px; gap: 1px; padding: 6px 0 0 8px; }
  .start i { background: #111; }
  .tasksearch { width: 170px; height: 19px; background: #fff; display: flex; align-items: center; padding-left: 5px; gap: 5px; color: #555; font-size: 7.5px; }
  .cortana { width: 25px; display: grid; place-items: center; }
  .cortana i { width: 8px; height: 8px; border: 1.500px solid #333; border-radius: 50%; }
  .taskview { width: 25px; display: grid; place-items: center; }
  .apps { display: flex; }
  .app { width: 25px; display: grid; place-items: center; position: relative; }
  .app.open { background: linear-gradient(#1974b5, #1974b5) center bottom / 20px 1px no-repeat; }
  .app.current { background: linear-gradient(#1974b5, #1974b5) center bottom / 24px 1px no-repeat, linear-gradient(#ecf3f7, #ecf3f7) center / 24px 20px no-repeat; }
  .tray { margin-left: auto; display: flex; align-items: center; }
  .pct { width: 24px; height: 9px; background: #158b43; border: 1px solid #fff; color: #fff; line-height: 7px; font-size: 7px; text-align: center; }
  .plug { margin: 0 2px 0 4px; }
  .trayicon { width: 12.200px; display: grid; place-items: center; }
  .clock { width: 38px; display: flex; flex-direction: column; align-items: center; font-size: 6.3px; line-height: 9px; }
  .notif { width: 26px; padding-left: 5px; position: relative; }
  .notif span { position: absolute; left: 8px; top: 3px; width: 9px; height: 8px; border-radius: 4px; background: #ccd2d5; border: 1px solid #777; font-size: 5px; line-height: 6px; text-align: center; }
  .cursor { position: absolute; left: 316px; top: 238px; z-index: 4; }
</style>
